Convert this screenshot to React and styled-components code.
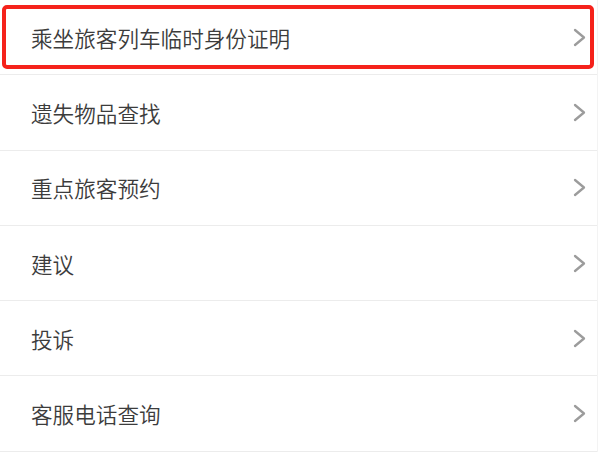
import styled, { createGlobalStyle } from "styled-components";

const GlobalStyle = createGlobalStyle`
  body {
    margin: 0;
    background: #ffffff;
    font-family: "Noto Sans CJK SC", "Noto Sans", sans-serif;
  }
`;

const items = [
  "乘坐旅客列车临时身份证明",
  "遗失物品查找",
  "重点旅客预约",
  "建议",
  "投诉",
  "客服电话查询",
];

function Chevron() {
  return (
    <svg width="13" height="19" viewBox="0 0 13 19">
      <polyline
        points="2,2 11,9.5 2,17"
        fill="none"
        stroke="#9c9c9c"
        strokeWidth="2.3"
        strokeLinecap="round"
        strokeLinejoin="round"
      />
    </svg>
  );
}

function App() {
  return (
    <>
      <GlobalStyle />
      <List>
        {items.map((label, i) => (
          <Row key={label}>
            <Label>{label}</Label>
            <Chevron />
            {i === 0 && <Highlight />}
          </Row>
        ))}
      </List>
    </>
  );
}

const List = styled.div`
  width: 597px;
  border-right: 1px solid #f3f3f3;
  background: #fff;
`;

const Row = styled.div`
  position: relative;
  height: 75.3px;
  box-sizing: border-box;
  display: flex;
  align-items: center;
  justify-content: space-between;
  padding: 0 11px 0 31px;
  border-bottom: 1px solid #ececec;
`;

const Label = styled.span`
  font-size: 21.6px;
  font-weight: 350;
  color: #3c3c3c;
`;

const Highlight = styled.div`
  position: absolute;
  left: 2px;
  top: 5px;
  width: 592px;
  height: 64px;
  box-sizing: border-box;
  border: 4px solid #f5221b;
  border-radius: 5px;
`;

export default App;
